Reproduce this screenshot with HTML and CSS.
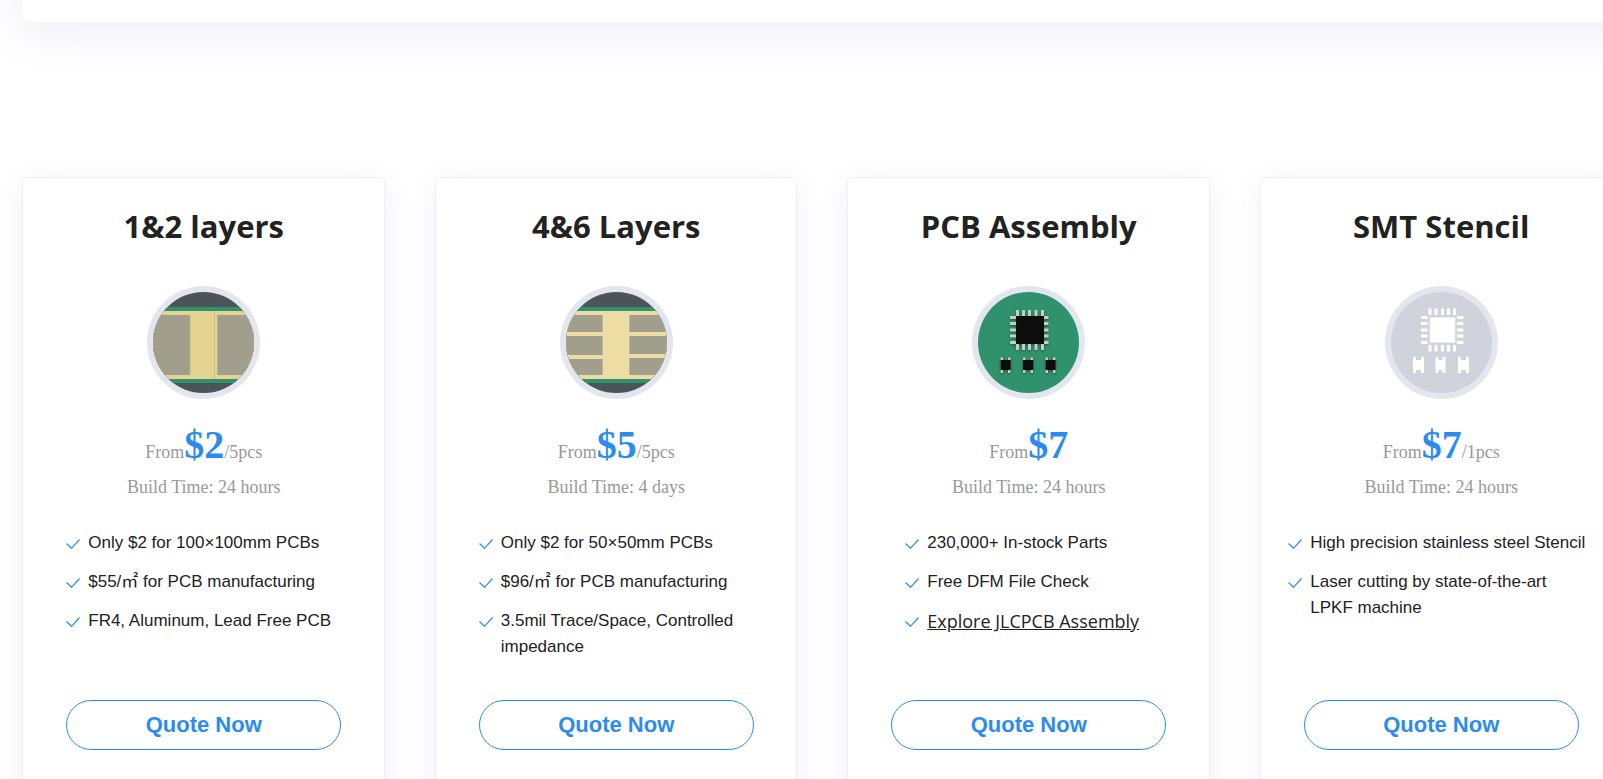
FILE: index.html
```html
<!DOCTYPE html>
<html lang="en">
<head>
    <meta charset="UTF-8">
    <meta name="viewport" content="width=device-width, initial-scale=1.0">
    <title>PCB Services</title>
    <link rel="stylesheet" href="styles.css">
</head>
<body>

    <!-- Shared shapes -->
    <svg class="sprite" aria-hidden="true">
        <symbol id="check" viewBox="0 0 14 10">
            <path d="M0.5 4.5L5.5 9.3L13.5 0.5" fill="none" stroke="#2b8cee" stroke-width="1.2"/>
        </symbol>
        <clipPath id="disc"><circle cx="56.5" cy="56.5" r="50.5"/></clipPath>
    </svg>

    <div class="page">
        <!-- Banner -->
        <div class="banner"></div>

        <!-- Service Cards -->
        <main class="card-grid">
            <section class="card">
                <h2>1&amp;2 layers</h2>
                <svg class="card-icon" viewBox="0 0 113 113">
                    <circle cx="56.5" cy="56.5" r="56.5" fill="#e3e6ee"/>
                    <g clip-path="url(#disc)">
                        <path d="M0 0h113v113H0z" fill="#4d5458"/>
                        <path d="M0 21h113v76H0z" fill="#30926c"/>
                        <path d="M0 25h113v68H0z" fill="#e5d391"/>
                        <path d="M0 29h43v60H0zM70 29h43v60H70z" fill="#a29e8e"/>
                        <path d="M43 29v60M70.500 29v60" stroke="#b9b287"/>
                        <path d="M67.500 25v68" stroke="#b9c98a"/>
                    </g>
                </svg>
                <p class="price">From<strong>$2</strong>/5pcs</p>
                <p class="build">Build Time: 24 hours</p>
                <ul class="features">
                    <li><svg><use href="#check"/></svg><span>Only $2 for 100×100mm PCBs</span></li>
                    <li><svg><use href="#check"/></svg><span>$55/㎡ for PCB manufacturing</span></li>
                    <li><svg><use href="#check"/></svg><span>FR4, Aluminum, Lead Free PCB</span></li>
                </ul>
                <button type="button">Quote Now</button>
            </section>

            <section class="card">
                <h2>4&amp;6 Layers</h2>
                <svg class="card-icon" viewBox="0 0 113 113">
                    <circle cx="56.5" cy="56.5" r="56.5" fill="#e3e6ee"/>
                    <g clip-path="url(#disc)">
                        <path d="M0 0h113v113H0z" fill="#4d5458"/>
                        <path d="M0 21h113v76H0z" fill="#30926c"/>
                        <path d="M0 25h113v68H0z" fill="#eddca4"/>
                        <path d="M0 29h43v17H0zM0 50h43v19H0zM0 73h43v16H0z" fill="#a29e8e"/>
                        <path d="M70 29h43v17H70zM70 50h43v18H70zM70 72h43v17H70z" fill="#a29e8e"/>
                        <path d="M42.500 29v17m0 4v19m0 4v16M69.500 29v17m0 4v18m0 4v17" stroke="#bdb991"/>
                    </g>
                </svg>
                <p class="price">From<strong>$5</strong>/5pcs</p>
                <p class="build">Build Time: 4 days</p>
                <ul class="features">
                    <li><svg><use href="#check"/></svg><span>Only $2 for 50×50mm PCBs</span></li>
                    <li><svg><use href="#check"/></svg><span>$96/㎡ for PCB manufacturing</span></li>
                    <li><svg><use href="#check"/></svg><span>3.5mil Trace/Space, Controlled impedance</span></li>
                </ul>
                <button type="button">Quote Now</button>
            </section>

            <section class="card">
                <h2>PCB Assembly</h2>
                <svg class="card-icon" viewBox="0 0 113 113">
                    <circle cx="56.5" cy="56.5" r="56.5" fill="#e3e6ee"/>
                    <circle cx="56.5" cy="56.5" r="50.5" fill="#30926c"/>
                    <g class="chip-shadow">
                        <path d="M44 24h3v40h-3zM50 24h3v40h-3zM56 24h3v40h-3zM62.500 24h3v40h-3zM69 24h3v40h-3z" fill="#c9cbc9"/>
                        <path d="M38 30h38.500v3H38zM38 36h38.500v3H38zM38 42.500h38.500v3H38zM38 48.500h38.500v3H38zM38 55h38.500v3H38z" fill="#c9cbc9"/>
                        <path d="M44 30h28v28H44z" fill="#0d0d0d"/>
                        <path d="M28.500 71.500h2.500v15.500h-2.500zM36 71.500h2.500v15.500H36zM51 71.500h2.500v15.500H51zM58.500 71.500h2.500v15.500h-2.500zM73.500 71.500h2.500v15.500h-2.500zM81 71.500h2.500v15.500H81z" fill="#c9cbc9"/>
                        <path d="M28.500 74h10.200v10H28.500zM51 74h10.200v10H51zM73.500 74h10.200v10H73.500z" fill="#0d0d0d"/>
                    </g>
                </svg>
                <p class="price">From<strong>$7</strong></p>
                <p class="build">Build Time: 24 hours</p>
                <ul class="features narrow">
                    <li><svg><use href="#check"/></svg><span>230,000+ In-stock Parts</span></li>
                    <li><svg><use href="#check"/></svg><span>Free DFM File Check</span></li>
                    <li><svg><use href="#check"/></svg><a href="#">Explore JLCPCB Assembly</a></li>
                </ul>
                <button type="button">Quote Now</button>
            </section>

            <section class="card">
                <h2>SMT Stencil</h2>
                <svg class="card-icon" viewBox="0 0 113 113">
                    <circle cx="56.5" cy="56.5" r="56.5" fill="#e3e6ee"/>
                    <circle cx="56.5" cy="56.5" r="50.5" fill="#d0d3db"/>
                    <g fill="#fff">
                        <path d="M45 31.500h25v25H45z" stroke="#eceef2"/>
                        <path d="M43.500 22.500h3v6.500h-3zM49.500 22.500h3v6.500h-3zM56 22.500h3v6.500h-3zM62 22.500h3v6.500h-3zM68 22.500h3v6.500h-3z"/>
                        <path d="M43.500 59h3v6.500h-3zM49.500 59h3v6.500h-3zM56 59h3v6.500h-3zM62 59h3v6.500h-3zM68 59h3v6.500h-3z"/>
                        <path d="M36 30h6.500v3H36zM36 36h6.500v3H36zM36 42.500h6.500v3H36zM36 48.500h6.500v3H36zM36 55h6.500v3H36z"/>
                        <path d="M72 30h6.500v3H72zM72 36h6.500v3H72zM72 42.500h6.500v3H72zM72 48.500h6.500v3H72zM72 55h6.500v3H72z"/>
                        <path d="M28 71h3v3h5v-3h3v16h-3v-3h-5v3h-3z"/>
                        <path d="M50.500 71h3v3h4v-3h3v16h-3v-3h-4v3h-3z"/>
                        <path d="M73 71h3v3h5v-3h3v16h-3v-3h-5v3h-3z"/>
                    </g>
                </svg>
                <p class="price">From<strong>$7</strong>/1pcs</p>
                <p class="build">Build Time: 24 hours</p>
                <ul class="features wide">
                    <li><svg><use href="#check"/></svg><span>High precision stainless steel Stencil</span></li>
                    <li><svg><use href="#check"/></svg><span>Laser cutting by state-of-the-art<br>LPKF machine</span></li>
                </ul>
                <button type="button">Quote Now</button>
            </section>
        </main>
    </div>

</body>
</html>
```
FILE: styles.css
```css
/* General Styles */
* {
    box-sizing: border-box;
}

body {
    margin: 0;
    background-color: #fff;
    color: #222;
    font-family: "Liberation Sans", Arial, "Noto Sans CJK SC", sans-serif;
    font-size: 18px;
}

.sprite {
    position: absolute;
    width: 0;
    height: 0;
}

.page {
    height: 100vh;
    padding-left: 22px;
    overflow: hidden;
}

/* Banner, scrolled mostly out of view */
.banner {
    height: 122px;
    margin: -100px -60px 155px 0;
    border-radius: 10px;
    background-color: #fff;
    box-shadow: 0 10px 50px rgba(76, 77, 160, 0.1);
}

/* Service Cards */
.card-grid {
    display: grid;
    grid-template-columns: repeat(4, 1fr);
    gap: 50px;
    margin-right: -19px;
}

.card {
    display: flex;
    flex-direction: column;
    align-items: center;
    height: 660px;
    padding: 24px 0 0 1px;
    border: 1px solid #f0f0f2;
    border-radius: 5px;
    background-color: #fff;
    box-shadow: 0 5px 30px rgba(76, 77, 160, 0.08);
}

.card h2 {
    margin: 0 0 36px;
    font-family: "Open Sans", "Noto Sans", sans-serif;
    font-size: 31px;
    font-weight: 700;
    line-height: 48px;
}

.card-icon {
    width: 113px;
    height: 113px;
}

.chip-shadow {
    filter: drop-shadow(0 1px 1px rgba(0, 0, 0, 0.4));
}

.price,
.build {
    margin: 0;
    font-family: "Liberation Serif", "Times New Roman", serif;
    color: #999;
}

.price {
    margin-top: 28px;
    line-height: 36px;
}

.price strong {
    font-size: 40px;
    color: #2b8cee;
}

.build {
    line-height: 34px;
}

/* Feature List */
.features {
    display: flex;
    flex-direction: column;
    gap: 13px;
    width: 275px;
    height: 170px;
    margin: 26px 0 0;
    padding: 0;
    font-size: 17px;
    list-style: none;
}

.features.narrow {
    width: 247px;
}

.features.wide {
    width: 306px;
}

.features li {
    display: flex;
    gap: 8px;
    line-height: 26px;
}

.features svg {
    flex: none;
    width: 14px;
    height: 10px;
    margin-top: 9px;
}

.features a {
    color: #222;
    font-family: "Open Sans", "Noto Sans", sans-serif;
    font-size: 18px;
}

.card button {
    width: 275px;
    height: 50px;
    border: 1px solid #2b8cee;
    border-radius: 25px;
    background-color: #fff;
    color: #2b8cee;
    font-family: inherit;
    font-size: 22px;
    font-weight: bold;
    cursor: pointer;
}
```
